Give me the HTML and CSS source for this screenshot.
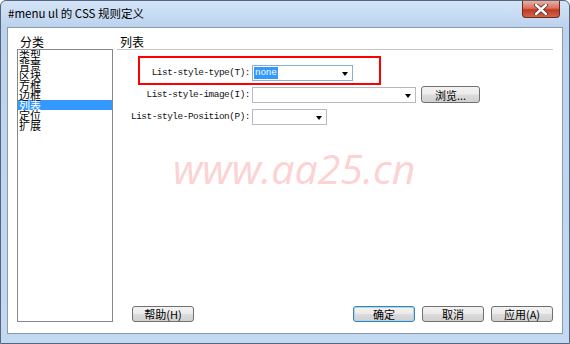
FILE: index.html
```html
<!DOCTYPE html>
<html lang="zh-CN">
<head>
<meta charset="utf-8">
<title>#menu ul 的 CSS 规则定义</title>
<link rel="stylesheet" href="styles.css">
</head>
<body>
<div class="window">
  <div class="titlebar">
    <span class="title">#menu ul 的 CSS 规则定义</span>
    <div class="close">
      <svg width="14" height="11" viewBox="0 0 14 11">
        <path d="M2 1 L12 10 M12 1 L2 10" stroke="#4a2a24" stroke-width="4" stroke-linecap="round"/>
        <path d="M2 1 L12 10 M12 1 L2 10" stroke="#ffffff" stroke-width="2.4" stroke-linecap="round"/>
      </svg>
    </div>
  </div>
  <div class="client">
    <div class="left">
      <div class="cat-label">分类</div>
      <ul class="catlist">
        <li>类型</li>
        <li>背景</li>
        <li>区块</li>
        <li>方框</li>
        <li>边框</li>
        <li class="sel">列表</li>
        <li>定位</li>
        <li>扩展</li>
      </ul>
    </div>
    <div class="right">
      <div class="section-head">列表</div>
      <div class="form">
        <div class="grid">
          <label class="lbl">List-style-type(T):</label>
          <div class="field">
            <div class="combo focus w101"><span class="val">none</span><span class="arrow"></span></div>
          </div>
          <label class="lbl">List-style-image(I):</label>
          <div class="field">
            <div class="combo w164"><span class="arrow"></span></div>
            <button class="btn browse">浏览...</button>
          </div>
          <label class="lbl">List-style-Position(P):</label>
          <div class="field">
            <div class="combo w75"><span class="arrow"></span></div>
          </div>
        </div>
        <div class="annot"></div>
      </div>
      <div class="buttons">
        <button class="btn wide help">帮助(H)</button>
        <button class="btn wide default">确定</button>
        <button class="btn wide">取消</button>
        <button class="btn wide">应用(A)</button>
      </div>
    </div>
    <div class="watermark">www.aa25.cn</div>
  </div>
</div>
</body>
</html>
```
FILE: styles.css
```css
* { box-sizing: border-box; }
html, body { margin: 0; padding: 0; background: #ffffff; }
body { width: 570px; height: 344px; overflow: hidden; font-family: "Noto Sans CJK SC", "Noto Sans", sans-serif; }

.window {
  width: 570px;
  height: 344px;
  border: 1px solid #56657a;
  border-radius: 6px 6px 0 0;
  background: linear-gradient(#d3e4f7 0px, #bcd3ee 26px, #c3d9f1 100%);
  display: flex;
  flex-direction: column;
}

.titlebar {
  height: 26px;
  display: flex;
  justify-content: space-between;
  align-items: flex-start;
  padding-left: 7px;
  padding-right: 9px;
}
.title {
  font-size: 11.5px;
  line-height: 24px;
  color: #000;
}
.close {
  width: 38px;
  height: 17px;
  border: 1px solid #6b2a20;
  border-top: none;
  border-radius: 0 0 4px 4px;
  background: linear-gradient(#eab1a4 0%, #d8705c 45%, #c23a22 55%, #d2644a 100%);
  display: flex;
  align-items: center;
  justify-content: center;
}

.client {
  position: relative;
  height: 307px;
  margin: 0 6px;
  border: 1px solid #8a9bb0;
  background: #ffffff;
  display: flex;
  gap: 4px;
  padding: 8px 9px 11px 9px;
}

.left {
  width: 96px;
  display: flex;
  flex-direction: column;
}
.cat-label {
  height: 13px;
  font-size: 12px;
  line-height: 12px;
  padding-left: 3px;
  color: #000;
}
.catlist {
  flex: 1;
  margin: 0;
  padding: 0;
  list-style: none;
  border: 1px solid #828790;
}
.catlist li {
  height: 10px;
  line-height: 10px;
  font-size: 11px;
  padding-left: 1px;
  color: #000;
  overflow: visible;
}
.catlist li.sel {
  background: #3399ff;
  color: #ffffff;
}

.right {
  flex: 1;
  display: flex;
  flex-direction: column;
}
.section-head {
  height: 14px;
  font-size: 12px;
  line-height: 12px;
  padding-left: 3px;
  border-bottom: 1px solid #c4c4c4;
  color: #000;
}

.form {
  position: relative;
  padding-top: 14px;
}
.grid {
  display: grid;
  grid-template-columns: 133px auto;
  column-gap: 2px;
  row-gap: 5px;
  align-items: center;
}
.lbl {
  text-align: right;
  font-family: "Liberation Mono", monospace;
  font-size: 9.4px;
  letter-spacing: -0.45px;
  line-height: 16px;
  color: #111;
  white-space: nowrap;
}
.field {
  display: flex;
  align-items: center;
  gap: 5px;
  height: 17px;
}
.combo {
  position: relative;
  height: 16px;
  border: 1px solid #b7bac1;
  background: #ffffff;
  padding-left: 1px;
  display: flex;
  align-items: center;
}
.combo.focus { border-color: #88aed6; }
.w101 { width: 101px; }
.w164 { width: 164px; }
.w75 { width: 75px; }
.val {
  font-family: "Liberation Mono", monospace;
  font-size: 9.4px;
  letter-spacing: -0.2px;
  line-height: 12px;
  background: #3399ff;
  color: #ffffff;
  padding: 0 1px;
}
.arrow {
  position: absolute;
  right: 4px;
  top: 6px;
  width: 0;
  height: 0;
  border-left: 3.5px solid transparent;
  border-right: 3.5px solid transparent;
  border-top: 4px solid #000;
}

.btn {
  height: 17px;
  margin: 0;
  padding: 0;
  border: 1px solid #707070;
  border-radius: 3px;
  background: linear-gradient(#f3f3f3 0%, #ebebeb 48%, #dcdcdc 52%, #d0d0d0 100%);
  font-family: "Noto Sans CJK SC", sans-serif;
  font-size: 11px;
  line-height: 14px;
  color: #000;
}
.browse { width: 59px; }

.annot {
  position: absolute;
  left: 21px;
  top: 6px;
  width: 243px;
  height: 29px;
  border: 2px solid #ff0000;
}

.buttons {
  margin-top: auto;
  display: flex;
  gap: 7px;
}
.wide { width: 62px; height: 16px; }
.help { margin-left: 15px; margin-right: auto; }
.default {
  border-color: #3c7fb1;
  box-shadow: inset 0 0 0 1px #a8d8f0;
}

.watermark {
  position: absolute;
  left: 165px;
  top: 115px;
  font-family: "Open Sans", sans-serif;
  font-style: italic;
  font-size: 41px;
  line-height: 50px;
  color: #fcd2d2;
  pointer-events: none;
}
```
